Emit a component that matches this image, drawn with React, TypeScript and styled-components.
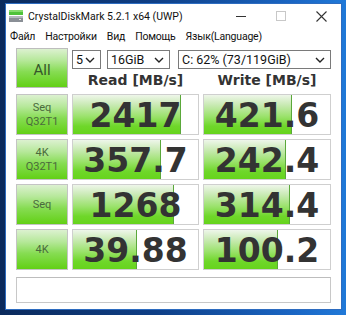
import styled, { createGlobalStyle } from 'styled-components';

const GlobalStyle = createGlobalStyle`
    html, body {
        margin: 0;
        padding: 0;
    }
    body {
        width: 346px;
        height: 315px;
        overflow: hidden;
    }
`;

interface Result {
    label: string[];
    read: string;
    readFill: number;
    write: string;
    writeFill: number;
}

const results: Result[] = [
    { label: ['Seq', 'Q32T1'], read: '2417', readFill: 86.5, write: '421.6', writeFill: 70 },
    { label: ['4K', 'Q32T1'], read: '357.7', readFill: 70, write: '242.4', writeFill: 65 },
    { label: ['Seq'], read: '1268', readFill: 81, write: '314.4', writeFill: 68.5 },
    { label: ['4K'], read: '39.88', readFill: 51, write: '100.2', writeFill: 59 },
];

const menuItems = ['Файл', 'Настройки', 'Вид', 'Помощь', 'Язык(Language)'];

const Desktop = styled.div`
    width: 346px;
    height: 315px;
    box-sizing: border-box;
    padding: 3px 4px 5px 5px;
    background: linear-gradient(90deg, #0b2a5c 0%, #0f3f86 45%, #1a66c4 85%, #2079d8 100%);
`;

const Window = styled.div`
    height: 100%;
    box-sizing: border-box;
    background: #ffffff;
    border: 1px solid #2d6cc0;
    display: flex;
    flex-direction: column;
    font-family: Roboto, 'Noto Sans', sans-serif;
    color: #000;
`;

const TitleBar = styled.div`
    height: 24px;
    display: flex;
    align-items: center;
    padding-left: 2px;
`;

const Title = styled.span`
    margin-left: 4px;
    font-size: 10.5px;
    color: #111;
    white-space: nowrap;
`;

const Controls = styled.div`
    display: flex;
    margin-left: auto;
    height: 100%;
`;

const ControlButton = styled.div`
    width: 40px;
    height: 100%;
    display: flex;
    align-items: center;
    justify-content: center;
`;

const MenuBar = styled.div`
    height: 16px;
    display: flex;
    align-items: center;
    gap: 10px;
    padding-left: 4px;
    font-size: 10.5px;
    letter-spacing: -0.2px;
    color: #111;
`;

const Content = styled.div`
    padding: 4px 10px 0 10px;
    display: flex;
    flex-direction: column;
`;

const TopSection = styled.div`
    display: grid;
    grid-template-columns: 52px 127px 128px;
    grid-template-rows: 21px 19px;
    column-gap: 4px;
`;

const greenFace = `
    linear-gradient(180deg, #dcf1d0 0%, #b6e89a 30%, #86dc52 60%, #62d015 100%)
`;

const AllButton = styled.div`
    grid-row: 1 / 3;
    box-sizing: border-box;
    border: 1px solid #bdbdbd;
    background: ${greenFace};
    display: flex;
    align-items: center;
    justify-content: center;
    padding-top: 3px;
    font-size: 15px;
    color: #35562a;
`;

const Selectors = styled.div`
    grid-column: 2 / 4;
    display: flex;
    align-items: flex-end;
    gap: 6px;
`;

const Select = styled.div<{ $width: number; $gap?: number }>`
    width: ${({ $width }) => $width}px;
    margin-left: ${({ $gap }) => $gap ?? 0}px;
    height: 19px;
    box-sizing: border-box;
    border: 1px solid #7a7a7a;
    display: flex;
    align-items: center;
    padding: 0 5px 0 3px;
    font-size: 12.5px;
    color: #111;
    white-space: nowrap;

    svg {
        margin-left: auto;
    }
`;

const Header = styled.div`
    display: flex;
    align-items: flex-end;
    justify-content: center;
    font-family: 'DejaVu Sans', Verdana, sans-serif;
    font-weight: bold;
    font-size: 14px;
    color: #333;
    line-height: 16px;
`;

const Rows = styled.div`
    margin-top: 6px;
    display: grid;
    grid-template-columns: 52px 127px 128px;
    grid-auto-rows: 41px;
    gap: 4px;
`;

const LabelCell = styled.div`
    box-sizing: border-box;
    border: 1px solid #c4c4c4;
    background: ${greenFace};
    display: flex;
    flex-direction: column;
    align-items: center;
    justify-content: center;
    font-size: 11px;
    line-height: 14px;
    color: #4a6a3c;
`;

const ValueCell = styled.div`
    position: relative;
    box-sizing: border-box;
    border: 1px solid #cfcfcf;
    background: #fff;
    display: flex;
    align-items: center;
    justify-content: center;
    overflow: hidden;
`;

const Bar = styled.div`
    position: absolute;
    left: 0;
    top: 0;
    bottom: 0;
    box-sizing: border-box;
    border-right: 1px solid #5aa83a;
    background: linear-gradient(180deg, #eef6ea 0%, #c9eab4 25%, #9be26c 55%, #6fd72a 80%, #66d41c 100%);
`;

const Value = styled.span`
    position: relative;
    font-family: 'DejaVu Sans', Verdana, sans-serif;
    font-weight: bold;
    font-size: 33px;
    line-height: 1;
    color: #333;
    margin-top: 2px;
`;

const Comment = styled.div`
    margin-top: 7px;
    height: 26px;
    box-sizing: border-box;
    border: 1px solid #c8c8c8;
    border-top-color: #bdbdbd;
    background: #fff;
`;

const Chevron = () => (
    <svg width="10" height="6" viewBox="0 0 10 6">
        <path d="M1 1 L5 5 L9 1" fill="none" stroke="#222" strokeWidth="1.4" />
    </svg>
);

const AppIcon = () => (
    <svg width="16" height="14" viewBox="0 0 16 14">
        <rect x="1" y="1" width="14" height="5" fill="#4fc23a" />
        <rect x="1" y="1" width="14" height="2" fill="#86dc6e" />
        <rect x="1" y="7" width="14" height="6" fill="#8a8f96" />
        <rect x="1" y="7" width="14" height="2" fill="#b5b9be" />
        <rect x="11" y="10" width="2" height="1" fill="#e6e6e6" />
    </svg>
);

const App = () => (
    <>
        <GlobalStyle />
        <Desktop>
            <Window>
                <TitleBar>
                    <AppIcon />
                    <Title>CrystalDiskMark 5.2.1 x64 (UWP)</Title>
                    <Controls>
                        <ControlButton>
                            <svg width="10" height="10" viewBox="0 0 10 10">
                                <path d="M0 5.5 H10" stroke="#333" strokeWidth="1" />
                            </svg>
                        </ControlButton>
                        <ControlButton>
                            <svg width="10" height="10" viewBox="0 0 10 10">
                                <rect x="0.5" y="0.5" width="9" height="9" fill="none" stroke="#c8c8c8" strokeWidth="1" />
                            </svg>
                        </ControlButton>
                        <ControlButton>
                            <svg width="11" height="11" viewBox="0 0 11 11">
                                <path d="M0.5 0.5 L10.5 10.5 M10.5 0.5 L0.5 10.5" stroke="#333" strokeWidth="1.1" />
                            </svg>
                        </ControlButton>
                    </Controls>
                </TitleBar>
                <MenuBar>
                    {menuItems.map((item) => (
                        <span key={item}>{item}</span>
                    ))}
                </MenuBar>
                <Content>
                    <TopSection>
                        <AllButton>All</AllButton>
                        <Selectors>
                            <Select $width={29}>
                                5<Chevron />
                            </Select>
                            <Select $width={63}>
                                16GiB<Chevron />
                            </Select>
                            <Select $width={153} $gap={2}>
                                C: 62% (73/119GiB)<Chevron />
                            </Select>
                        </Selectors>
                        <Header>Read [MB/s]</Header>
                        <Header>Write [MB/s]</Header>
                    </TopSection>
                    <Rows>
                        {results.map((row) => (
                            <>
                                <LabelCell key={`${row.label.join('-')}-label`}>
                                    {row.label.map((line) => (
                                        <span key={line}>{line}</span>
                                    ))}
                                </LabelCell>
                                <ValueCell key={`${row.label.join('-')}-read`}>
                                    <Bar style={{ width: `${row.readFill}%` }} />
                                    <Value>{row.read}</Value>
                                </ValueCell>
                                <ValueCell key={`${row.label.join('-')}-write`}>
                                    <Bar style={{ width: `${row.writeFill}%` }} />
                                    <Value>{row.write}</Value>
                                </ValueCell>
                            </>
                        ))}
                    </Rows>
                    <Comment />
                </Content>
            </Window>
        </Desktop>
    </>
);

export default App;
